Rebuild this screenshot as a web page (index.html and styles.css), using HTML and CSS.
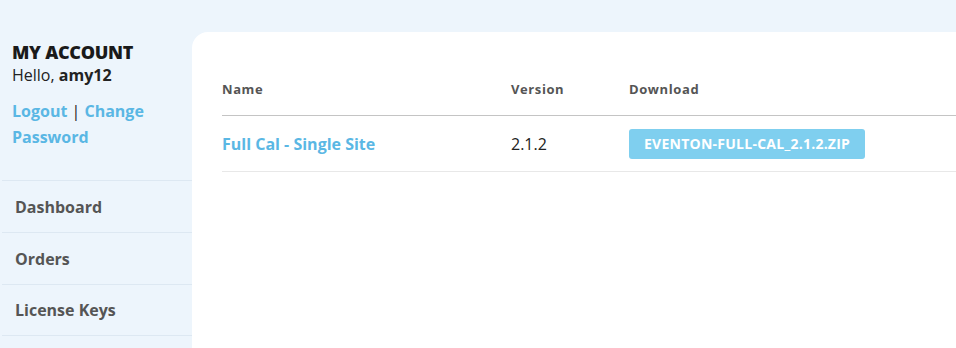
FILE: index.html
```html
<!DOCTYPE html>
<html>
<head>
<meta charset="utf-8">
<link rel="stylesheet" href="styles.css">
</head>
<body>
<div class="page">
  <aside class="sidebar">
    <div class="account">
      <h2 class="title">MY ACCOUNT</h2>
      <p class="hello">Hello, <strong>amy12</strong></p>
      <p class="links"><a href="#">Logout</a> <span class="sep">|</span> <a href="#">Change Password</a></p>
    </div>
    <ul class="menu">
      <li><a href="#">Dashboard</a></li>
      <li><a href="#">Orders</a></li>
      <li><a href="#">License Keys</a></li>
    </ul>
  </aside>
  <main class="panel">
    <table class="downloads">
      <thead>
        <tr><th class="c-name">Name</th><th class="c-ver">Version</th><th>Download</th></tr>
      </thead>
      <tbody>
        <tr>
          <td><a class="prod" href="#">Full Cal - Single Site</a></td>
          <td class="ver">2.1.2</td>
          <td><a class="btn" href="#">EVENTON-FULL-CAL_2.1.2.ZIP</a></td>
        </tr>
      </tbody>
    </table>
  </main>
</div>
</body>
</html>
```
FILE: styles.css
```css
html, body { margin: 0; padding: 0; }
body {
  background: #edf5fc;
  font-family: "Open Sans", "Liberation Sans", sans-serif;
  width: 956px;
  height: 348px;
  overflow: hidden;
}
.page {
  display: flex;
  padding-top: 32px;
  height: 316px;
}
.sidebar {
  width: 192px;
  flex: none;
}
.account {
  padding: 8px 0 0 12px;
}
.title {
  margin: 0;
  font-size: 18px;
  font-weight: 800;
  letter-spacing: -0.3px;
  color: #1a1a1a;
  line-height: 24px;
}
.hello {
  margin: 0;
  font-size: 16px;
  color: #222;
  line-height: 22px;
}
.hello strong { font-weight: 700; }
.links {
  margin: 12px 0 0 0;
  font-size: 16px;
  line-height: 26px;
  font-weight: 700;
  width: 150px;
}
.links a { color: #5ab7e4; text-decoration: none; }
.links .sep { color: #222; font-weight: 400; }
.menu {
  list-style: none;
  margin: 30px 0 0 2px;
  padding: 0;
  border-top: 1px solid #dde8f2;
}
.menu li {
  border-bottom: 1px solid #dde8f2;
  height: 51px;
  display: flex;
  align-items: center;
}
.menu li:last-child { height: 50px; }
.menu a {
  padding-left: 13px;
  font-size: 16px;
  font-weight: 700;
  color: #555;
  text-decoration: none;
}
.panel {
  flex: 1;
  background: #fff;
  border-top-left-radius: 16px;
  padding: 38px 0 0 30px;
}
.downloads {
  border-collapse: collapse;
  width: 100%;
}
.downloads th {
  text-align: left;
  font-size: 13px;
  font-weight: 700;
  letter-spacing: 0.6px;
  color: #555;
  padding: 10px 0 17px;
  border-bottom: 1px solid #c4c4c4;
}
.downloads .c-name { width: 289px; }
.downloads .c-ver { width: 118px; }
.downloads td {
  padding: 0;
  height: 55px;
  border-bottom: 1px solid #e8e8e8;
}
.prod {
  color: #5ab7e4;
  font-size: 16px;
  font-weight: 700;
  text-decoration: none;
}
.ver {
  font-size: 16px;
  color: #222;
}
.btn {
  display: inline-block;
  background: #7fcfef;
  color: #fff;
  font-size: 14px;
  font-weight: 700;
  padding: 0 15px;
  height: 30px;
  line-height: 30px;
  border-radius: 3px;
  text-decoration: none;
  letter-spacing: 0.25px;
}
```
